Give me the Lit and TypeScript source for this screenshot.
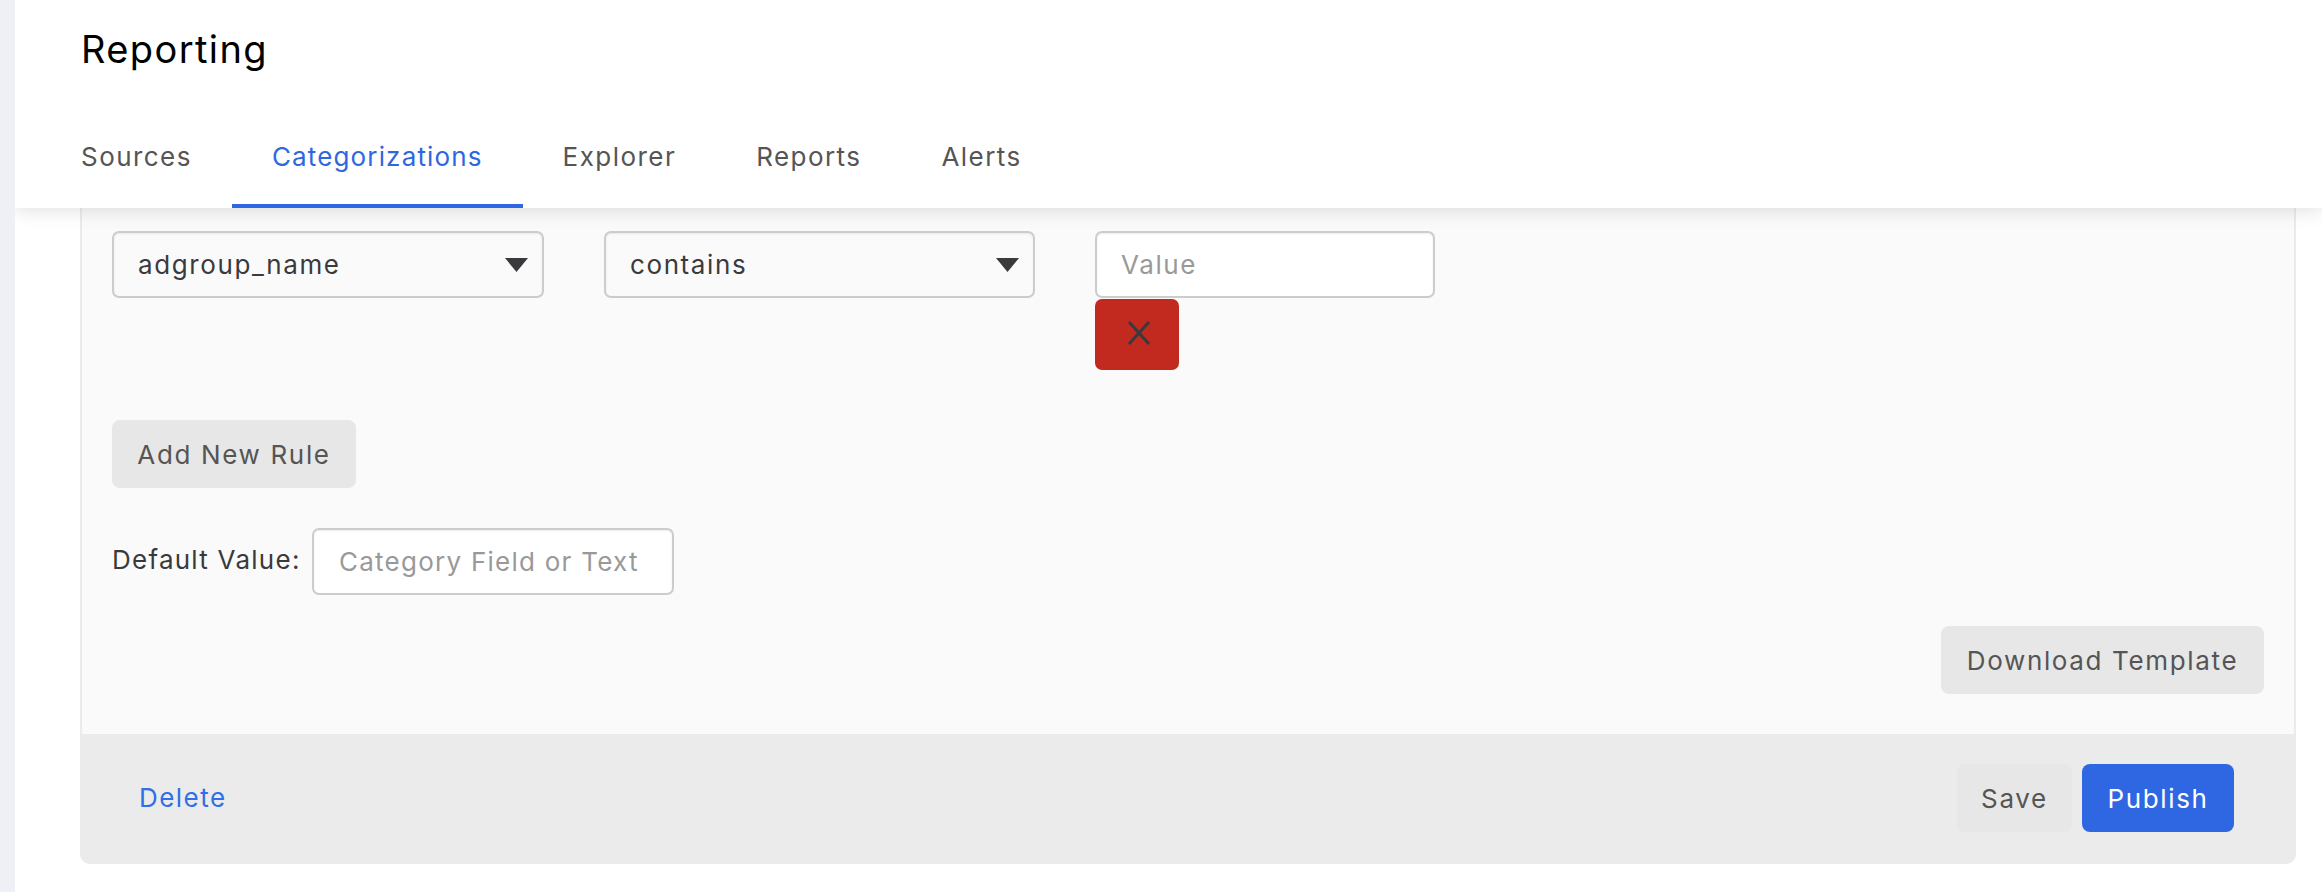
import { LitElement, html, css } from "lit";
import { customElement } from "lit/decorators.js";

@customElement("app-root")
export class AppRoot extends LitElement {
  static styles = css`
    :host { display: flex; width: 2322px; height: 892px; overflow: hidden; background: #fff; font-family: "Inter", "Liberation Sans", sans-serif; font-size: 26px; letter-spacing: 1.25px; color: #3a3a3d; }
    * { box-sizing: border-box; }
    .strip { position: relative; z-index: 2; width: 15px; background: #eff0f6; flex: none; }
    .main { flex: 1; display: flex; flex-direction: column; background: #fff; min-width: 0; }
    .header { position: relative; z-index: 1; height: 208px; flex: none; background: #fff; box-shadow: 0 2px 18px rgba(0,0,0,.13); padding: 24px 0 0 66px; display: flex; flex-direction: column; }
    h1 { margin: 0; font-size: 38px; line-height: 50px; font-weight: 400; color: #000; letter-spacing: 1.4px; }
    .tabs { display: flex; margin: 60px 0 0 -40px; height: 74px; }
    .tab { padding: 0 40px; line-height: 46px; color: #555; border-bottom: 4px solid transparent; height: 74px; letter-spacing: 1.45px; }
    .tab.active { color: #2f67e2; border-bottom-color: #2f67e2; letter-spacing: 1.15px; }
    .content { padding: 0 26px 0 65px; }
    .card { border-radius: 0 0 10px 10px; overflow: hidden; background: #ebebeb; }
    .body { background: #fafafa; border: solid #ebebeb; border-width: 0 2px; padding: 23px 30px 40px 30px; }
    .rule { display: flex; align-items: flex-start; }
    .select { height: 67px; display: flex; align-items: center; justify-content: space-between; padding: 0 14px 0 24px; background: #fafafa; border: 2px solid #ccc; border-radius: 7px; box-shadow: inset 0 1px 2px rgba(0,0,0,.08); color: #3a3a3d; letter-spacing: 1.6px; }
    .s1 { width: 432px; margin-right: 60px; }
    .s2 { width: 431px; margin-right: 60px; }
    .caret { width: 23px; height: 14px; fill: #3a3a3d; }
    .valuecol { display: flex; flex-direction: column; align-items: flex-start; }
    input { height: 67px; border: 2px solid #ccc; border-radius: 7px; background: #fff; box-shadow: inset 0 1px 2px rgba(0,0,0,.08); padding: 0 25px; font: inherit; letter-spacing: inherit; color: #3a3a3d; outline: none; }
    input::placeholder { color: #999; opacity: 1; }
    .value { width: 340px; padding-left: 24px; letter-spacing: 1.6px; }
    .remove { width: 84px; height: 71px; border: 0; border-radius: 7px; background: #c22a20; display: flex; align-items: center; justify-content: center; padding: 0 0 4px 4px; margin-top: 1px; }
    .remove svg { width: 24px; height: 24px; stroke: #3a3a3d; stroke-width: 3; fill: none; }
    .btn { height: 68px; border: 0; border-radius: 8px; background: #e7e7e7; color: #555; font: inherit; letter-spacing: 1.65px; padding: 0; display: inline-flex; align-items: center; justify-content: center; }
    .add { margin-top: 50px; width: 244px; }
    .default { display: flex; align-items: flex-start; margin-top: 40px; }
    .default label { width: 200px; line-height: 64px; color: #3a3a3d; }
    .default input { width: 362px; }
    .dl-row { display: flex; justify-content: flex-end; margin-top: 31px; }
    .dl { width: 323px; }
    .footer { height: 130px; display: flex; align-items: flex-start; justify-content: space-between; padding: 30px 62px 0 59px; }
    .delete { color: #2f6fe8; line-height: 68px; letter-spacing: 1.45px; }
    .actions { display: flex; gap: 10px; }
    .save { width: 115px; }
    .publish { width: 152px; background: #2f67e2; color: #fff; }
  `;

  render() {
    const caret = html`<svg class="caret" viewBox="0 0 23 14"><path d="M0 0H23L11.5 14Z" /></svg>`;
    return html`
      <div class="strip"></div>
      <div class="main">
        <header class="header">
          <h1>Reporting</h1>
          <nav class="tabs">
            <div class="tab">Sources</div>
            <div class="tab active">Categorizations</div>
            <div class="tab">Explorer</div>
            <div class="tab">Reports</div>
            <div class="tab">Alerts</div>
          </nav>
        </header>
        <div class="content">
          <div class="card">
            <div class="body">
              <div class="rule">
                <div class="select s1"><span>adgroup_name</span>${caret}</div>
                <div class="select s2"><span>contains</span>${caret}</div>
                <div class="valuecol">
                  <input class="value" placeholder="Value" />
                  <button class="remove"><svg viewBox="0 0 24 24"><path d="M2 1L22 23M22 1L2 23" /></svg></button>
                </div>
              </div>
              <button class="btn add">Add New Rule</button>
              <div class="default">
                <label>Default Value:</label>
                <input placeholder="Category Field or Text" />
              </div>
              <div class="dl-row"><button class="btn dl">Download Template</button></div>
            </div>
            <div class="footer">
              <span class="delete">Delete</span>
              <div class="actions">
                <button class="btn save">Save</button>
                <button class="btn publish">Publish</button>
              </div>
            </div>
          </div>
        </div>
      </div>
    `;
  }
}
